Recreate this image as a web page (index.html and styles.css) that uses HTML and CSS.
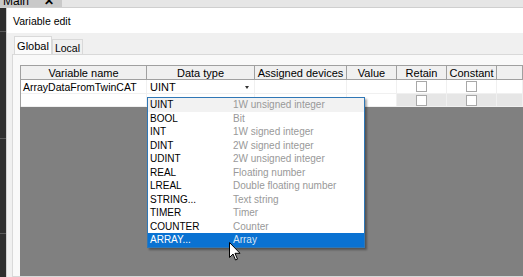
FILE: index.html
```html
<!DOCTYPE html>
<html lang="en">
<head>
  <meta charset="UTF-8">
  <title>Variable edit</title>
  <link rel="stylesheet" href="styles.css">
</head>
<body>
  <div class="topbar">
    <div class="doc-tab"><span>Main</span><span class="close">✕</span></div>
  </div>
  <div class="workspace">
    <div class="side">
      <div class="side-seg s1"></div>
      <div class="side-seg s2"></div>
      <div class="side-seg s3"></div>
    </div>
    <div class="dialog">
      <div class="title">Variable edit</div>
      <div class="tabs">
        <div class="tab active">Global</div>
        <div class="tab">Local</div>
      </div>
      <div class="panel">
        <div class="grid">
          <div class="th">Variable name</div>
          <div class="th">Data type</div>
          <div class="th">Assigned devices</div>
          <div class="th">Value</div>
          <div class="th">Retain</div>
          <div class="th">Constant</div>
          <div class="th"></div>

          <div class="td">ArrayDataFromTwinCAT</div>
          <div class="td type">UINT<span class="arrow"></span></div>
          <div class="td"></div>
          <div class="td"></div>
          <div class="td center"><span class="check"></span></div>
          <div class="td center"><span class="check"></span></div>
          <div class="td"></div>

          <div class="td"></div>
          <div class="td"></div>
          <div class="td"></div>
          <div class="td"></div>
          <div class="td center off"><span class="check"></span></div>
          <div class="td center off"><span class="check"></span></div>
          <div class="td off"></div>
        </div>
        <div class="empty"></div>
      </div>
    </div>
  </div>

  <div class="dropdown">
    <div class="item hover"><span class="name">UINT</span><span class="desc">1W unsigned integer</span></div>
    <div class="item"><span class="name">BOOL</span><span class="desc">Bit</span></div>
    <div class="item"><span class="name">INT</span><span class="desc">1W signed integer</span></div>
    <div class="item"><span class="name">DINT</span><span class="desc">2W signed integer</span></div>
    <div class="item"><span class="name">UDINT</span><span class="desc">2W unsigned integer</span></div>
    <div class="item"><span class="name">REAL</span><span class="desc">Floating number</span></div>
    <div class="item"><span class="name">LREAL</span><span class="desc">Double floating number</span></div>
    <div class="item"><span class="name">STRING...</span><span class="desc">Text string</span></div>
    <div class="item"><span class="name">TIMER</span><span class="desc">Timer</span></div>
    <div class="item"><span class="name">COUNTER</span><span class="desc">Counter</span></div>
    <div class="item selected"><span class="name">ARRAY...</span><span class="desc">Array</span></div>
  </div>

  <svg class="cursor" width="12" height="19" viewBox="0 0 12 19">
    <path d="M0.5 0.5 L0.5 15.5 L4 12 L6.5 18 L8.5 17.2 L6 11.3 L11 11.3 Z" fill="#fff" stroke="#000" stroke-width="1"/>
  </svg>
</body>
</html>
```

FILE: styles.css
```css
body {
  margin: 0;
  width: 523px;
  height: 277px;
  overflow: hidden;
  position: relative;
  font-family: "Liberation Sans", Arial, sans-serif;
  font-size: 10px;
  color: #000;
  background-color: #2b2b2b;
}
.topbar {
  height: 7px;
  background-color: #e6e6e6;
  border-bottom: 1px solid #cfcfcf;
  overflow: hidden;
}
.doc-tab {
  width: 62px;
  height: 7px;
  background-color: #c9c9c9;
  display: flex;
  justify-content: space-between;
  padding: 0 8px 0 3px;
  box-sizing: border-box;
  font-size: 12px;
  line-height: 1;
}
.doc-tab span {
  margin-top: -5px;
}
.doc-tab .close {
  font-weight: bold;
}
.workspace {
  display: flex;
  height: 269px;
}
.side {
  width: 6px;
  background-color: #2e2e2e;
  display: flex;
  flex-direction: column;
}
.side-seg {
  border-bottom: 1px solid #5a5a5a;
}
.s1 { height: 23px; }
.s2 { height: 106px; }
.s3 { height: 94px; }
.dialog {
  flex: 1;
  display: flex;
  flex-direction: column;
  background-color: #f0f0f0;
  border-left: 1px solid #d0d0d0;
}
.title {
  height: 25px;
  line-height: 26px;
  font-size: 10.5px;
  background-color: #fff;
  padding-left: 6px;
}
.tabs {
  display: flex;
  align-items: flex-end;
  height: 21px;
  padding-left: 7px;
}
.tab {
  width: 31px;
  height: 15px;
  line-height: 16px;
  font-size: 10.5px;
  text-align: center;
  box-sizing: border-box;
  border: 1px solid #d9d9d9;
  border-bottom: none;
  background-color: #f0f0f0;
}
.tab.active {
  width: 38px;
  height: 18px;
  line-height: 19px;
  font-size: 11px;
  background-color: #fbfbfb;
}
.panel {
  flex: 1;
  margin-left: 5px;
  border: 1px solid #d9d9d9;
  border-right: none;
  background-color: #f9f9f9;
  padding: 10px 0 0 7px;
  display: flex;
  flex-direction: column;
}
.grid {
  display: grid;
  grid-template-columns: 126px 108px 92px 50px 50px 50px 1fr;
  grid-template-rows: 14px 14px 13px;
  border-top: 1px solid #a0a0a0;
  border-left: 1px solid #a0a0a0;
  background-color: #fff;
}
.th {
  background-color: #f0f0f0;
  border-right: 1px solid #a0a0a0;
  border-bottom: 1px solid #a0a0a0;
  text-align: center;
  line-height: 14px;
  font-size: 11px;
}
.td {
  border-right: 1px solid #f0f0f0;
  border-bottom: 1px solid #f0f0f0;
  line-height: 14px;
  padding-left: 2px;
  font-size: 10.5px;
  position: relative;
}
.td.type {
  padding-left: 3px;
  font-size: 11px;
}
.td.center {
  display: flex;
  justify-content: center;
  align-items: center;
  padding-left: 0;
}
.td.off {
  background-color: #e6e6e6;
}
.check {
  width: 9px;
  height: 9px;
  border: 1px solid #a8a8a8;
  background-color: #fff;
}
.arrow {
  position: absolute;
  left: 98px;
  top: 6px;
  border-left: 2.5px solid transparent;
  border-right: 2.5px solid transparent;
  border-top: 3px solid #333;
}
.empty {
  flex: 1;
  background-color: #808080;
}
.dropdown {
  position: absolute;
  left: 147px;
  top: 97px;
  width: 216px;
  border: 1px solid #2f77b6;
  background-color: #fff;
  box-shadow: 2px 2px 2px rgba(0, 0, 0, 0.35);
}
.item {
  display: flex;
  height: 13.5px;
  line-height: 14px;
  padding-left: 2px;
}
.item.hover {
  background-color: #f2f2f2;
}
.item.selected {
  background-color: #0a72d2;
  color: #fff;
}
.name {
  width: 83px;
}
.desc {
  color: #999;
}
.item.selected .desc {
  color: #d6e6f6;
}
.cursor {
  position: absolute;
  left: 229px;
  top: 242px;
}
```
